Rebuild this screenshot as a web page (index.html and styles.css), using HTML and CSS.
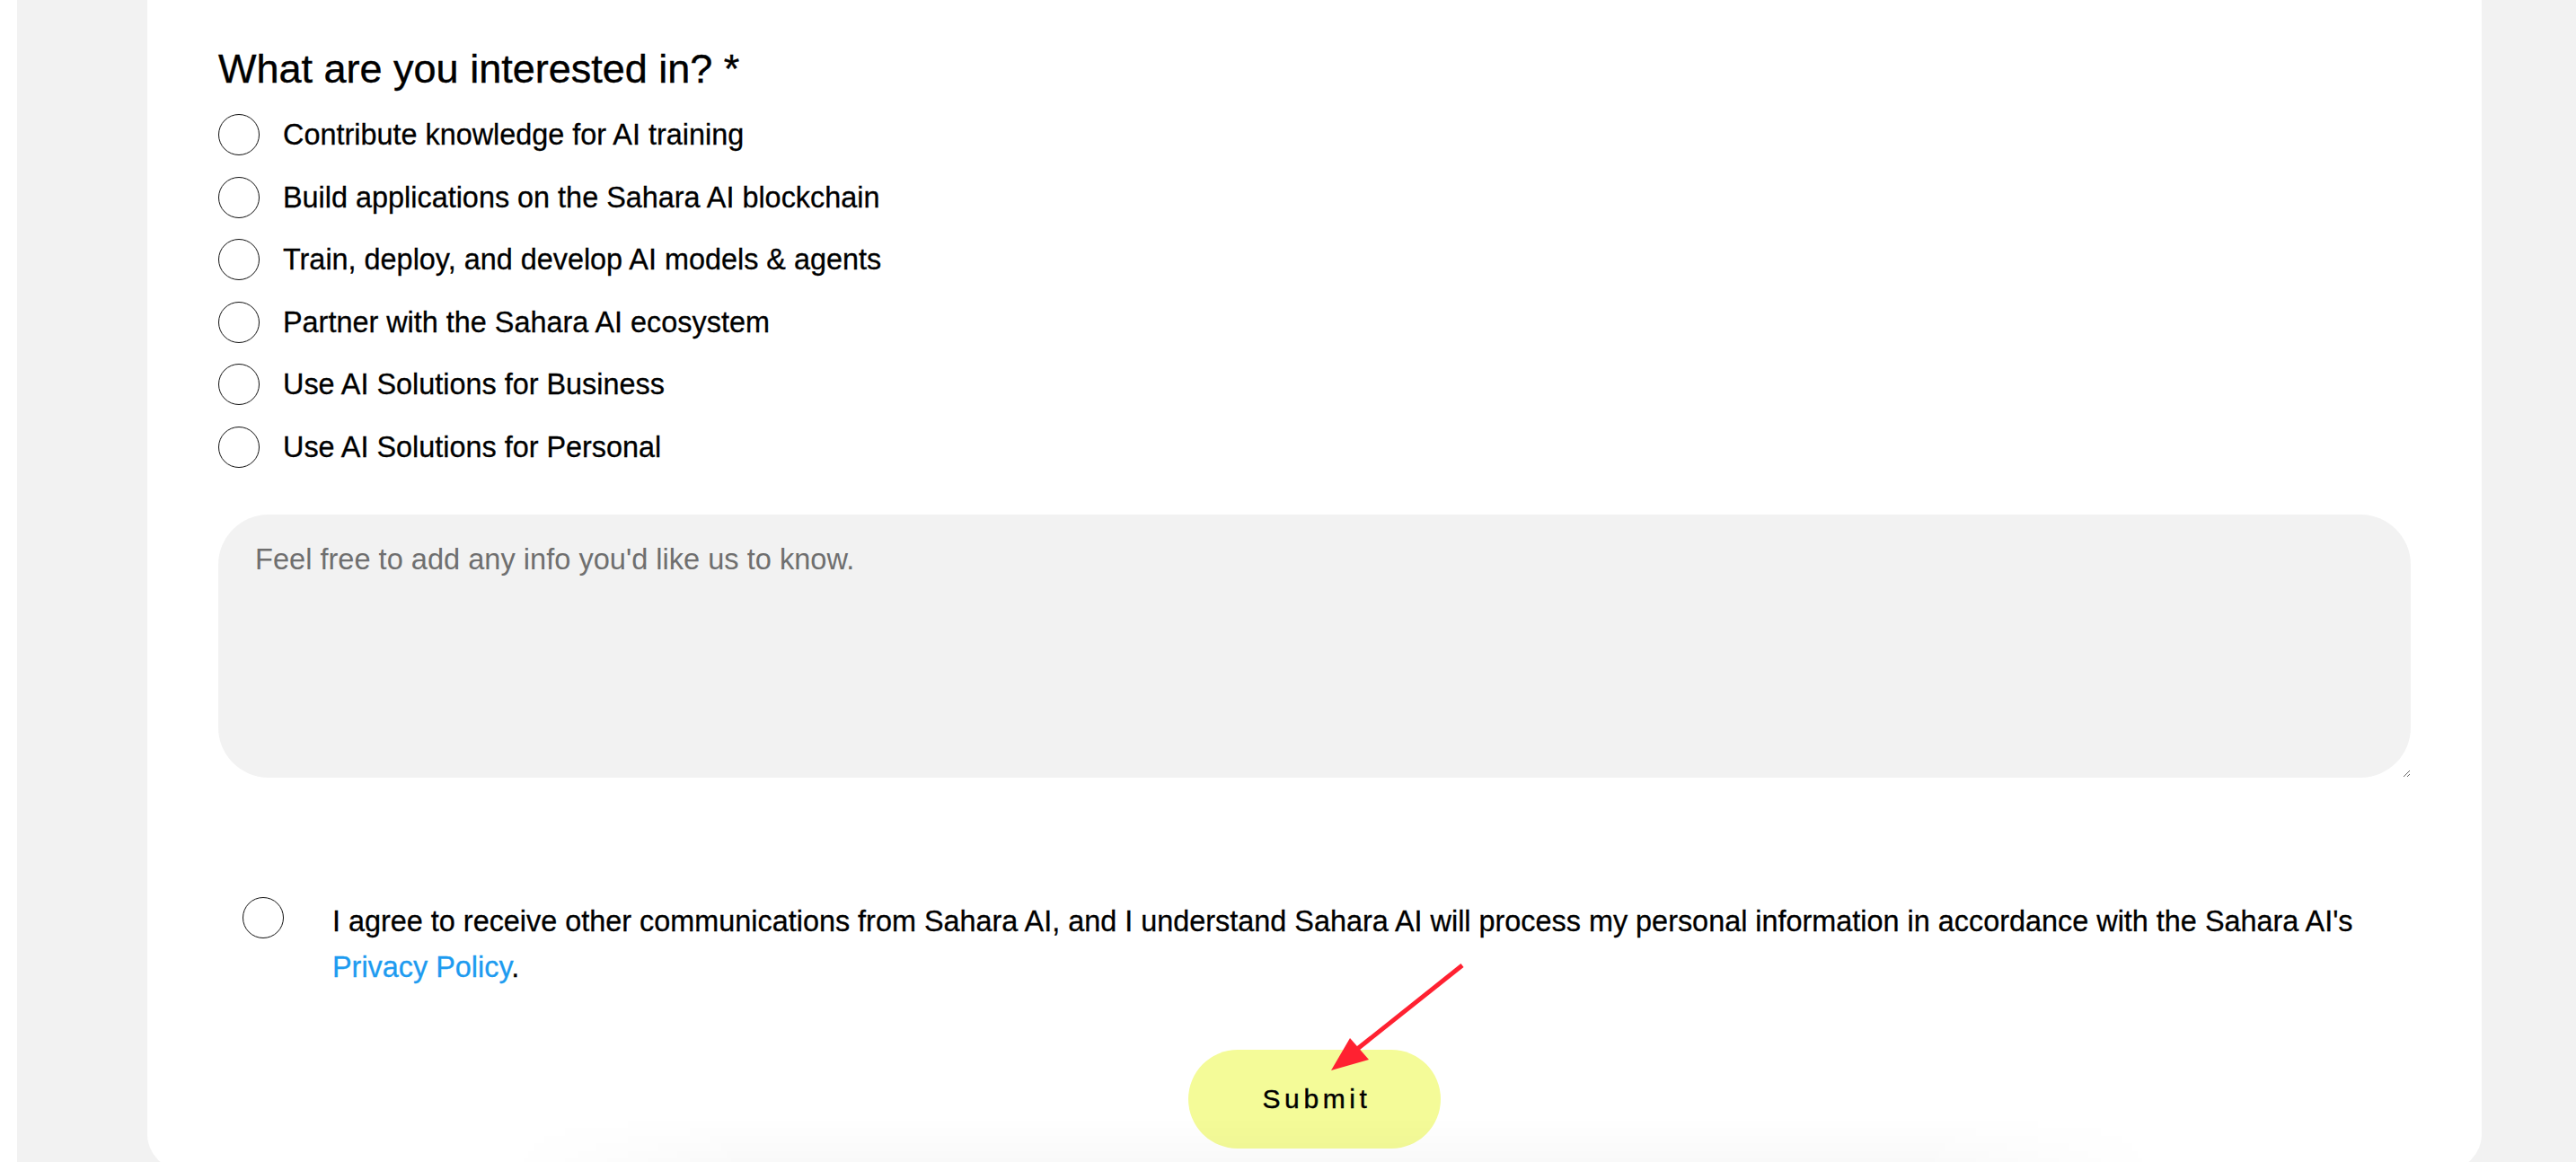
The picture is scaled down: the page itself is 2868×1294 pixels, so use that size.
FILE: index.html
```html
<!DOCTYPE html>
<html lang="en">
<head>
<meta charset="utf-8">
<title>Sahara AI - Contact</title>
<link rel="stylesheet" href="styles.css">
</head>
<body>
  <div class="page">
    <main class="card">
      <form class="form">
        <h2 class="question">What are you interested in? *</h2>
        <div class="options">
          <label class="option"><input type="radio" name="interest" class="radio"><span>Contribute knowledge for AI training</span></label>
          <label class="option"><input type="radio" name="interest" class="radio"><span>Build applications on the Sahara AI blockchain</span></label>
          <label class="option"><input type="radio" name="interest" class="radio"><span>Train, deploy, and develop AI models &amp; agents</span></label>
          <label class="option"><input type="radio" name="interest" class="radio"><span>Partner with the Sahara AI ecosystem</span></label>
          <label class="option"><input type="radio" name="interest" class="radio"><span>Use AI Solutions for Business</span></label>
          <label class="option"><input type="radio" name="interest" class="radio"><span>Use AI Solutions for Personal</span></label>
        </div>
        <textarea class="info" placeholder="Feel free to add any info you'd like us to know."></textarea>
        <label class="consent">
          <input type="radio" name="consent" class="radio consent-radio">
          <span class="consent-text">I agree to receive other communications from Sahara AI, and I understand Sahara AI will process my personal information in accordance with the Sahara AI's <a class="link" href="#">Privacy Policy</a>.</span>
        </label>
        <div class="actions">
          <button type="button" class="submit">Submit</button>
        </div>
      </form>
      <svg class="arrow" width="170" height="140" viewBox="0 0 170 140" aria-hidden="true">
        <line x1="158" y1="10" x2="40" y2="104" stroke="#ff2131" stroke-width="5" stroke-linecap="butt"/>
        <polygon points="12,127 33,91 54,115" fill="#ff2131"/>
      </svg>
    </main>
  </div>
  <div class="fade"></div>
</body>
</html>
```

FILE: styles.css
```css
html, body {
  margin: 0;
  height: 100%;
  overflow: hidden;
  background: #ffffff;
  font-family: "Liberation Sans", Arial, sans-serif;
  color: #000;
}

.page {
  margin-left: 19px;
  min-height: 100%;
  background: #f2f2f2;
  padding: 0 105px 0 145px;
}

.card {
  position: relative;
  background: #ffffff;
  border-radius: 0 0 40px 40px;
  padding: 50px 79px 24px;
}

.form {
  display: flex;
  flex-direction: column;
}

.question {
  margin: 0 0 23px;
  font-size: 45px;
  line-height: 54px;
  font-weight: 400;
  -webkit-text-stroke: 0.4px #000;
}

.options {
  display: flex;
  flex-direction: column;
  gap: 23.5px;
}

.option {
  display: flex;
  align-items: center;
  gap: 26px;
  font-size: 32.4px;
  line-height: 46px;
  -webkit-text-stroke: 0.3px #000;
}

.radio {
  appearance: none;
  -webkit-appearance: none;
  flex: none;
  width: 46px;
  height: 46px;
  margin: 0;
  border: 1.8px solid #111;
  border-radius: 50%;
  background: #fff;
  box-sizing: border-box;
}

.info {
  display: block;
  box-sizing: border-box;
  width: 100%;
  height: 293px;
  margin-top: 52.5px;
  padding: 28px 41px;
  border: none;
  border-radius: 56px;
  background: #f2f2f2;
  font-family: "Liberation Sans", Arial, sans-serif;
  font-size: 32.6px;
  line-height: 44px;
  color: #000;
  outline: none;
}

.info::placeholder {
  color: #6f6f6f;
}

.consent {
  display: flex;
  align-items: flex-start;
  gap: 54px;
  margin-top: 135px;
  padding-left: 27px;
}

.consent-radio {
  margin-top: -2px;
}

.consent-text {
  flex: 1;
  font-size: 32.4px;
  line-height: 51px;
  -webkit-text-stroke: 0.3px #000;
}

.link {
  color: #1d9bf0;
  text-decoration: none;
  -webkit-text-stroke: 0.3px #1d9bf0;
}

.actions {
  display: flex;
  justify-content: center;
  margin-top: 66px;
}

.submit {
  width: 281px;
  height: 110px;
  border: none;
  border-radius: 55px;
  background: #f4fb98;
  font-family: "Liberation Sans", Arial, sans-serif;
  font-size: 30px;
  letter-spacing: 4.6px;
  padding: 0 0 0 5px;
  color: #000;
  -webkit-text-stroke: 0.4px #000;
}

.arrow {
  position: absolute;
  left: 1306px;
  top: 1065px;
}

.fade {
  position: fixed;
  left: 560px;
  right: 460px;
  bottom: 0;
  height: 50px;
  background: linear-gradient(to bottom, rgba(0,0,0,0), rgba(0,0,0,0.022));
  -webkit-mask-image: linear-gradient(to right, transparent, #000 15%, #000 85%, transparent);
  mask-image: linear-gradient(to right, transparent, #000 15%, #000 85%, transparent);
  pointer-events: none;
}
```
